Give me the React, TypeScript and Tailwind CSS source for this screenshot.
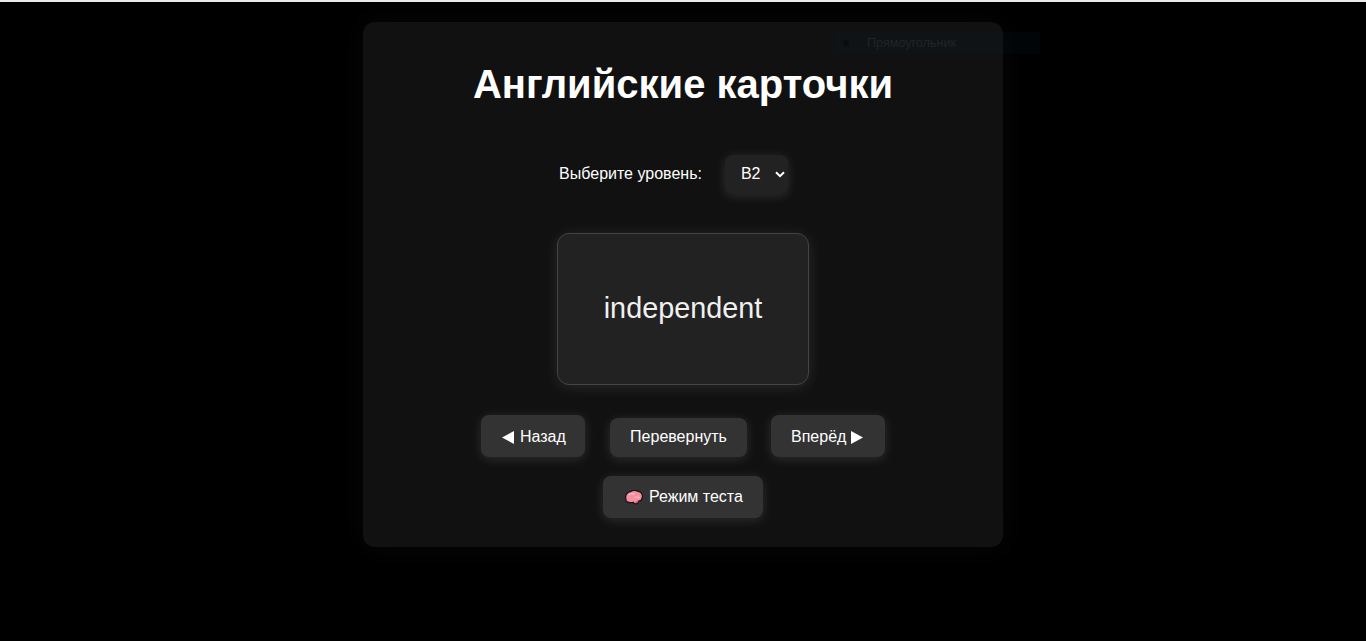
export default function App() {
  const btn = "rounded-lg bg-[#333333] px-5 text-white text-base shadow-[0_2px_12px_rgba(255,255,255,0.12)] whitespace-nowrap";
  return (
    <div className="relative h-[641px] overflow-hidden bg-black font-['Liberation_Sans',Arial,sans-serif] text-white">
      <div className="h-[2px] bg-[#e8eaed]" />
      <div className="flex justify-center pt-5">
        <div className="flex h-[525px] w-[640px] flex-col items-center rounded-xl bg-[#111111] pt-[39px] shadow-[0_0_30px_rgba(255,255,255,0.03)]">
          <h1 className="text-[40px] font-bold leading-[46px]">Английские карточки</h1>
          <div className="mt-[47px] mr-[19px] flex h-[40px] items-center">
            <span className="text-base leading-[18px]">Выберите уровень:</span>
            <div className="ml-[23px] flex h-[39px] w-[63px] items-center rounded-lg bg-[#222222] pl-4 shadow-[0_2px_12px_rgba(255,255,255,0.12)]">
              <span className="text-base">B2</span>
              <svg className="ml-[14px] shrink-0" width="10" height="7" viewBox="0 0 10 7" fill="none"><path d="M1 1.2 5 5.2 9 1.2" stroke="white" strokeWidth="2" /></svg>
            </div>
          </div>
          <div className="mt-[39px] flex h-[152px] w-[252px] items-center justify-center rounded-xl border border-[#444444] bg-[#222222] text-[28.8px] text-[#f0f0f0] shadow-[0_2px_15px_rgba(255,255,255,0.1)]">independent</div>
          <div className="mt-[30px] flex items-end gap-6">
            <button className={`${btn} flex h-[42px] w-[104px] items-center pt-[2px]`}>
              <svg className="ml-[1px] shrink-0" width="12" height="13" viewBox="0 0 12 13"><path d="M12 0V13L0 6.5Z" fill="white" /></svg>
              <span className="ml-[6px]">Назад</span>
            </button>
            <button className={`${btn} ml-[1px] h-[39px] w-[137px] pb-[1px]`}>Перевернуть</button>
            <button className={`${btn} flex h-[42px] w-[114px] items-center pt-[2px]`}>
              <span>Вперёд</span>
              <svg className="ml-[5px] mr-[1px] shrink-0" width="12" height="13" viewBox="0 0 12 13"><path d="M0 0V13L12 6.5Z" fill="white" /></svg>
            </button>
          </div>
          <button className={`${btn} mt-[19px] flex h-[42px] items-center`}>
            <svg className="ml-[2px] mr-[1.5px] shrink-0" width="18" height="15" viewBox="0.4 0.4 17.2 14">
              <path d="M1 7.5C.7 4.6 3 2 5.6 1.8 7.6.4 11 .4 13 1.6c2.6.6 4.4 3 4 5.6-.3 2-1.7 3.4-3.6 3.7-.6 1.4-1.6 2.8-3 2.7-1-.1-1.6-.9-2-1.6-2.5.5-5.9.4-7-1.3C1.4 9.8 1.1 8.7 1 7.5Z" fill="#f4909f" stroke="#1c1014" strokeWidth="1.2" />
              <path d="M10.5 11.5c1.2-.3 2.2-.5 3-1.2-.4 1.3-1.3 2.7-2.3 2.6-.5 0-.8-.8-.7-1.4Z" fill="#dc4b62" />
              <path d="M4 5c1.5-1.3 4-1.5 5.5-.5M9.5 7.5c1.5-.8 3.5-.6 5 .2" fill="none" stroke="#fbbcc5" strokeWidth="1" />
            </svg>
            <span className="ml-[4.4px]">Режим теста</span>
          </button>
        </div>
      </div>
      <div className="absolute left-[835px] top-[32px] flex h-[22px] w-[205px] items-center bg-[rgba(20,40,60,0.12)] text-[12.6px] text-[#222426]">
        <span className="ml-[8px] h-[6px] w-[6px] rounded-full bg-[#0c0c0c]" />
        <span className="ml-[18px]">Прямоугольник</span>
      </div>
    </div>
  );
}
